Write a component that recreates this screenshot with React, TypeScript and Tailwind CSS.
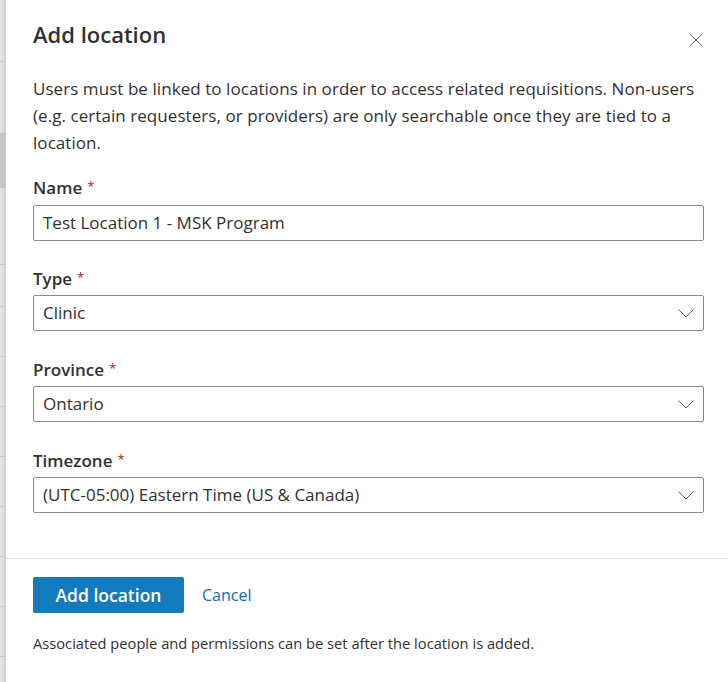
import React from 'react'

const font = {fontFamily: '"Open Sans", "Noto Sans", sans-serif'}

function Label({children}: {children: React.ReactNode}) {
	return (
		<div className="flex h-[24px] items-start text-[17px] font-semibold leading-[24px] text-[#323130]">
			{children}
			<span className="ml-[5px] text-[13px] font-normal leading-[20px] text-[#a4262c]">*</span>
		</div>
	)
}

function Chevron() {
	return (
		<svg width="16" height="9" viewBox="0 0 16 9" className="absolute right-[9px] top-[13px]">
			<path d="M0.5 0.5 L8 8 L15.5 0.5" fill="none" stroke="#605e5c" strokeWidth="1" />
		</svg>
	)
}

function Select({value}: {value: string}) {
	return (
		<div className="relative mt-[4px] flex h-[36px] items-center rounded-[2px] border border-[#8a8886] bg-white px-[9px] text-[17px] text-[#323130]">
			{value}
			<Chevron />
		</div>
	)
}

export default function App() {
	return (
		<div className="flex h-[682px] w-[728px] overflow-hidden bg-white" style={font}>
			<div className="flex w-[6px] flex-col bg-gradient-to-r from-[#e6e6e6] to-[#d2d2d2]">
				<div className="h-[62px] border-b border-[#c8c8c8]" />
				<div className="h-[71px]" />
				<div className="h-[55px] bg-[#c6c6c6]" />
				<div className="h-[77px] border-b border-[#c8c8c8]" />
				<div className="h-[42px] border-b border-[#c8c8c8]" />
				<div className="h-[50px] border-b border-[#c8c8c8]" />
				<div className="h-[50px] border-b border-[#c8c8c8]" />
				<div className="h-[50px] border-b border-[#c8c8c8]" />
				<div className="h-[50px] border-b border-[#c8c8c8]" />
				<div className="h-[50px] border-b border-[#c8c8c8]" />
				<div className="h-[50px] border-b border-[#c8c8c8]" />
				<div className="h-[50px] border-b border-[#c8c8c8]" />
			</div>
			<div className="relative flex flex-1 flex-col">
				<div className="pl-[27px] pr-[24px] pt-[19px]">
					<div className="flex items-start justify-between">
						<h1 className="text-[22px] font-semibold leading-[30px] text-[#323130]">Add location</h1>
						<button className="mr-[1px] mt-[14px] text-[#605e5c]">
							<svg width="14" height="14" viewBox="0 0 14 14">
								<path d="M1 1 L13 13 M13 1 L1 13" stroke="#605e5c" strokeWidth="1" />
							</svg>
						</button>
					</div>
					<p className="mt-[26px] text-[17px] leading-[27px] tracking-[0.06px] text-[#323130]">
						Users must be linked to locations in order to access related requisitions. Non-users (e.g.
						certain requesters, or providers) are only searchable once they are tied to a location.
					</p>
					<div className="mt-[20px]">
						<Label>Name</Label>
						<div className="mt-[5px] flex h-[36px] items-center rounded-[2px] border border-[#8a8886] bg-white px-[9px] text-[17px] text-[#323130]">
							Test Location 1 - MSK Program
						</div>
					</div>
					<div className="mt-[26px]">
						<Label>Type</Label>
						<Select value="Clinic" />
					</div>
					<div className="mt-[27px]">
						<Label>Province</Label>
						<Select value="Ontario" />
					</div>
					<div className="mt-[27px]">
						<Label>Timezone</Label>
						<Select value="(UTC-05:00) Eastern Time (US & Canada)" />
					</div>
				</div>
				<div className="mt-[45px] border-t border-[#e1dfdd]" />
				<div className="px-[27px] pt-[18px]">
					<div className="flex items-center">
						<button className="h-[36px] w-[151px] rounded-[2px] bg-[#137bbd] text-[17.5px] font-semibold text-white">
							Add location
						</button>
						<a className="ml-[18px] text-[16px] text-[#0f6cbd]">Cancel</a>
					</div>
					<p className="mt-[19px] text-[14.7px] text-[#323130]">
						Associated people and permissions can be set after the location is added.
					</p>
				</div>
			</div>
		</div>
	)
}
